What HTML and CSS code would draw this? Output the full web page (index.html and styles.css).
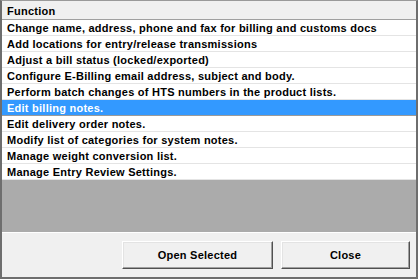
FILE: index.html
```html
<!DOCTYPE html>
<html lang="en">
<head>
    <meta charset="UTF-8">
    <title>Functions</title>
    <link rel="stylesheet" href="styles.css">
</head>
<body>
    <div class="window">
        <div class="grid">
            <div class="row header">Function</div>
            <div class="row">Change name, address, phone and fax for billing and customs docs</div>
            <div class="row">Add locations for entry/release transmissions</div>
            <div class="row">Adjust a bill status (locked/exported)</div>
            <div class="row">Configure E-Billing email address, subject and body.</div>
            <div class="row">Perform batch changes of HTS numbers in the product lists.</div>
            <div class="row selected">Edit billing notes.</div>
            <div class="row">Edit delivery order notes.</div>
            <div class="row">Modify list of categories for system notes.</div>
            <div class="row">Manage weight conversion list.</div>
            <div class="row">Manage Entry Review Settings.</div>
        </div>
        <div class="footer">
            <button class="btn btn-open">Open Selected</button>
            <button class="btn btn-close">Close</button>
        </div>
    </div>
</body>
</html>
```

FILE: styles.css
```css
body {
    margin: 0;
    background: #ffffff;
    font-family: "Liberation Sans", Arial, sans-serif;
    font-weight: bold;
    font-size: 11px;
    color: #000000;
}
.window {
    width: 414px;
    border: 2px solid #6e6e6e;
    border-top: 1px solid #9a9a9a;
    background: #f0f0f0;
}
.grid {
    height: 231px;
    background: #ababab;
    border-bottom: 1px solid #ffffff;
}
.row {
    height: 15px;
    line-height: 16px;
    padding-left: 5px;
    letter-spacing: 0.25px;
    background: #ffffff;
    border-bottom: 1px solid #e4e4e4;
    white-space: nowrap;
    overflow: hidden;
}
.header {
    height: 18px;
    line-height: 20px;
    background: #f0f0f0;
    border-bottom: 1px solid #a0a0a0;
}
.selected {
    background: #3399ff;
    color: #ffffff;
    border-bottom-color: #9a9a9a;
}
.footer {
    height: 44px;
    display: flex;
    justify-content: flex-end;
    align-items: flex-start;
    gap: 8px;
    padding: 8px 6px 0 0;
    box-sizing: border-box;
}
.btn {
    height: 28px;
    background: #f0f0f0;
    font-family: inherit;
    font-weight: bold;
    font-size: 11px;
    letter-spacing: 0.25px;
    color: #000000;
    border: 1px solid;
    border-color: #ffffff #505050 #505050 #ffffff;
    box-shadow: inset -1px -1px 0 #a0a0a0, inset 1px 1px 0 #e3e3e3;
    padding: 0;
}
.btn-open {
    width: 151px;
}
.btn-close {
    width: 129px;
}
```
